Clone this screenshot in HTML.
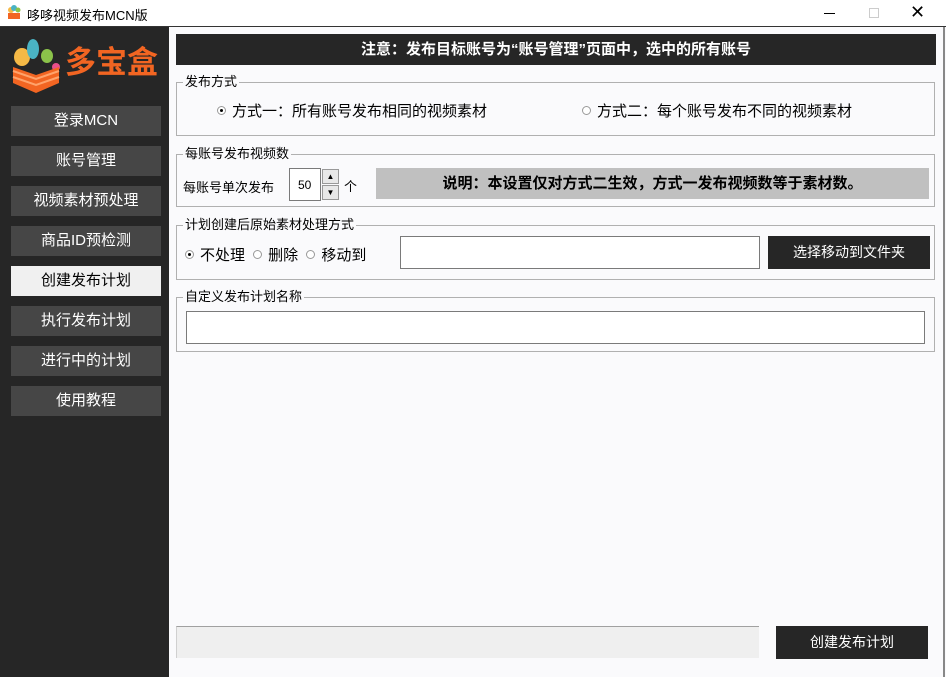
<!DOCTYPE html>
<html><head><meta charset="utf-8"><style>
*{margin:0;padding:0;box-sizing:border-box}
body{width:946px;height:677px;position:relative;background:#fafafc;font-family:"Liberation Sans","Noto Sans CJK SC",sans-serif;overflow:hidden;color:#000}
.a{position:absolute}
.tb{left:0;top:0;width:946px;height:27px;background:#fff;border-bottom:1px solid #333}
.side{left:0;top:27px;width:169px;height:650px;background:#262626}
.btn{position:absolute;left:11px;width:150px;height:30px;background:#464646;color:#fff;font-size:15px;text-align:center;line-height:30px}
.btn.sel{background:#f0f0f0;color:#000}
.grp{position:absolute;left:176px;width:759px;border:1px solid #b0b0b0}
.lg{position:absolute;left:6px;top:-9px;background:#fafafc;font-size:13px;padding:0 2px;line-height:16px}
.t13{font-size:14px;position:absolute;white-space:nowrap}
.rad{display:inline-block;width:9px;height:9px;border:1px solid #999;border-radius:50%;vertical-align:middle;margin-right:6px;position:relative;top:-2px;background:#fff}
.rad.on::after{content:"";position:absolute;left:2px;top:2px;width:3px;height:3px;background:#000;border-radius:50%}
.inp{position:absolute;background:#fff;border:1px solid #7a7a7a}
.dk{position:absolute;background:#262626;color:#fff;font-size:14px;text-align:center}
</style></head><body>
<div class="a tb">
 <svg class="a" style="left:6px;top:5px" width="16" height="16" viewBox="0 0 16 16"><circle cx="5" cy="5" r="3" fill="#f5b946"/><circle cx="8" cy="3" r="3" fill="#4ab3c4"/><circle cx="12" cy="5" r="2.5" fill="#8bc34a"/><path d="M2 8h12v6H2z" fill="#f26522"/></svg>
 <div class="a" style="left:27px;top:5px;font-size:13px">哆哆视频发布MCN版</div>
 <div class="a" style="left:824px;top:13px;width:11px;height:1px;background:#000"></div>
 <div class="a" style="left:869px;top:8px;width:10px;height:10px;border:1px solid #ccc"></div>
 <div class="a" style="left:910px;top:2px;font-size:18px;font-weight:300">✕</div>
</div>
<div class="a" style="left:943px;top:27px;width:2px;height:650px;background:#888"></div>
<div class="a side">
 <svg class="a" style="left:10px;top:12px" width="52" height="56" viewBox="0 0 52 56"><ellipse cx="12" cy="18" rx="8" ry="9" fill="#f5b946"/><ellipse cx="23" cy="10" rx="6" ry="10" fill="#4ab3c4"/><ellipse cx="37" cy="17" rx="6" ry="7" fill="#8bc34a"/><circle cx="46" cy="28" r="4" fill="#e84f8a"/><path d="M3 28l23 8 23-8v16l-23 10-23-10z" fill="#f26522"/><path d="M3 32l23 8 23-8" stroke="#ffa36b" stroke-width="2" fill="none"/><path d="M3 38l23 8 23-8" stroke="#ffa36b" stroke-width="2" fill="none"/></svg>
 <div class="a" style="left:65px;top:16px;font-size:31px;font-weight:bold;color:#f26522;white-space:nowrap;line-height:40px">多宝盒</div>
 <div class="btn" style="top:79px">登录MCN</div>
 <div class="btn" style="top:119px">账号管理</div>
 <div class="btn" style="top:159px">视频素材预处理</div>
 <div class="btn" style="top:199px">商品ID预检测</div>
 <div class="btn sel" style="top:239px">创建发布计划</div>
 <div class="btn" style="top:279px">执行发布计划</div>
 <div class="btn" style="top:319px">进行中的计划</div>
 <div class="btn" style="top:359px">使用教程</div>
</div>
<div class="a" style="left:176px;top:34px;width:760px;height:31px;background:#262626;color:#fff;font-weight:bold;font-size:15px;text-align:center;line-height:31px">注意：发布目标账号为“账号管理”页面中，选中的所有账号</div>

<div class="grp" style="top:82px;height:54px"><div class="lg">发布方式</div>
 <div class="t13" style="left:40px;top:17px;font-size:15px"><span class="rad on"></span>方式一：所有账号发布相同的视频素材</div>
 <div class="t13" style="left:405px;top:17px;font-size:15px"><span class="rad"></span>方式二：每个账号发布不同的视频素材</div>
</div>
<div class="grp" style="top:154px;height:53px"><div class="lg">每账号发布视频数</div>
 <div class="t13" style="left:6px;top:22px;font-size:13px">每账号单次发布</div>
 <div class="inp" style="left:112px;top:13px;width:32px;height:33px;font-size:12px;padding:9px 0 0 8px">50</div>
 <div class="a" style="left:145px;top:14px;width:17px;height:15px;background:#e8e8e8;border:1px solid #999;font-size:8px;text-align:center;line-height:13px">▲</div>
 <div class="a" style="left:145px;top:30px;width:17px;height:15px;background:#e8e8e8;border:1px solid #999;font-size:8px;text-align:center;line-height:13px">▼</div>
 <div class="t13" style="left:167px;top:21px;font-size:13px">个</div>
 <div class="a" style="left:199px;top:13px;width:553px;height:31px;background:#c0c0c0;font-weight:bold;font-size:15px;text-align:center;line-height:31px">说明：本设置仅对方式二生效，方式一发布视频数等于素材数。</div>
</div>
<div class="grp" style="top:225px;height:55px"><div class="lg">计划创建后原始素材处理方式</div>
 <div class="t13" style="left:8px;top:18px;font-size:15px"><span class="rad on"></span>不处理 <span class="rad" style="margin-left:4px"></span>删除 <span class="rad" style="margin-left:4px"></span>移动到</div>
 <div class="inp" style="left:223px;top:10px;width:360px;height:33px"></div>
 <div class="dk" style="left:591px;top:10px;width:162px;height:33px;line-height:33px">选择移动到文件夹</div>
</div>
<div class="grp" style="top:297px;height:55px"><div class="lg">自定义发布计划名称</div>
 <div class="inp" style="left:9px;top:13px;width:739px;height:33px"></div>
</div>
<div class="a" style="left:176px;top:626px;width:583px;height:32px;background:#efefef;border-top:1px solid #a0a0a0;border-left:1px solid #d0d0d0"></div>
<div class="dk" style="left:776px;top:626px;width:152px;height:33px;line-height:33px">创建发布计划</div>
</body></html>
